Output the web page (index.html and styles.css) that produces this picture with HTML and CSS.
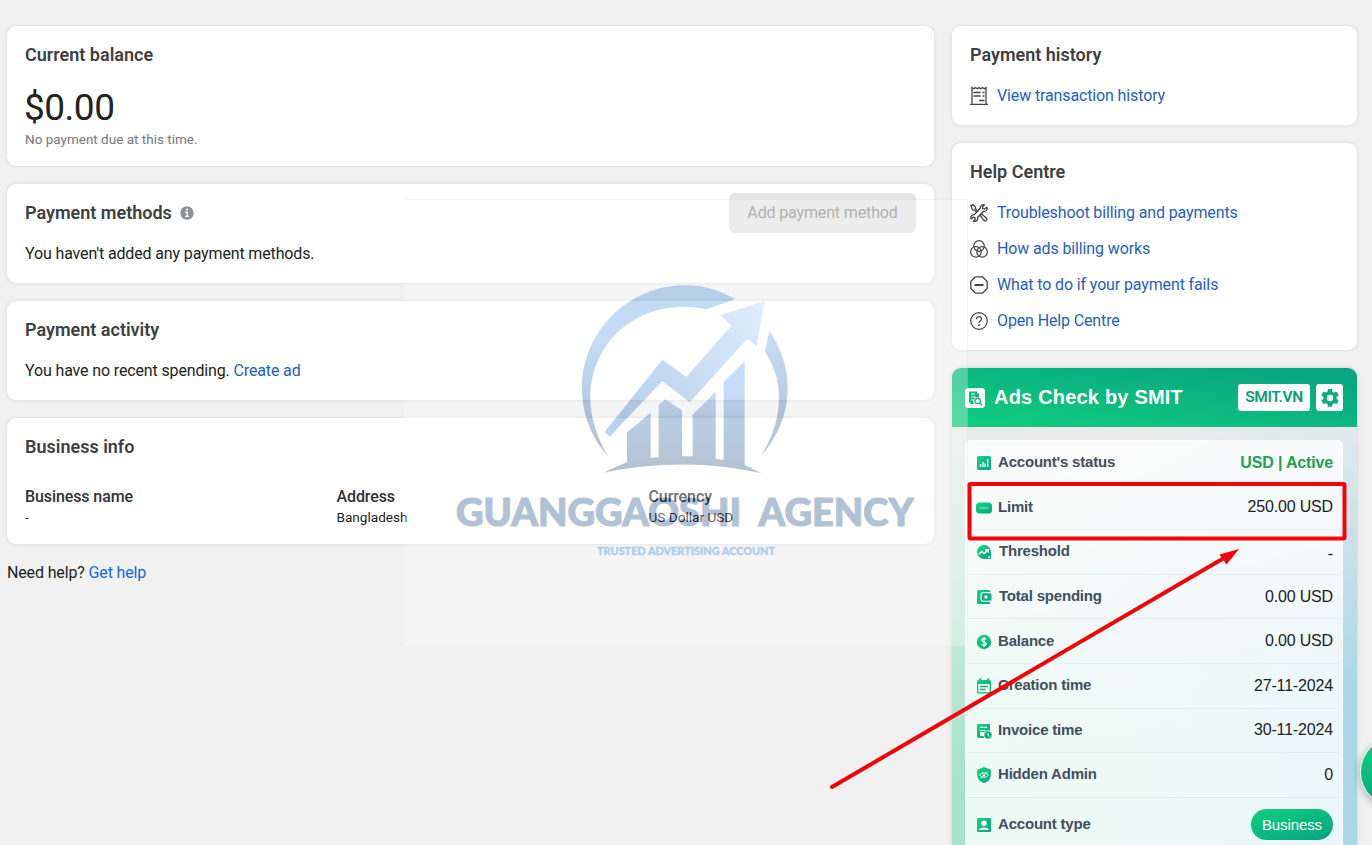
FILE: index.html
```html
<!DOCTYPE html>
<html lang="en">
<head>
<meta charset="utf-8">
<title>Billing</title>
<link rel="stylesheet" href="styles.css">
</head>
<body>
<svg class="defs" width="0" height="0"><defs>
  <linearGradient id="green" x1="0" y1="0" x2="1" y2="1"><stop offset="0" stop-color="#12d683"/><stop offset="1" stop-color="#08a57e"/></linearGradient>
</defs></svg>
<div class="page">
  <main class="main">
    <section class="card balance">
      <h2>Current balance</h2>
      <div class="amount">$0.00</div>
      <div class="note">No payment due at this time.</div>
    </section>
    <section class="card methods">
      <div class="card-head">
        <h2>Payment methods</h2>
        <svg class="info" width="14" height="14" viewBox="0 0 14 14"><circle cx="7" cy="7" r="6.7" fill="#8d9196"/><path d="M5.300 6.200H7.200V10.200M5.200 10.400h3.800" stroke="#fff" stroke-width="1.400" fill="none"/><circle cx="7" cy="3.600" r="1.100" fill="#fff"/></svg>
        <button class="add">Add payment method</button>
      </div>
      <p>You haven't added any payment methods.</p>
    </section>
    <section class="card activity">
      <h2>Payment activity</h2>
      <p>You have no recent spending. <a>Create ad</a></p>
    </section>
    <section class="card business">
      <h2>Business info</h2>
      <div class="facts">
        <div><b>Business name</b><span>-</span></div>
        <div><b>Address</b><span>Bangladesh</span></div>
        <div><b>Currency</b><span>US Dollar USD</span></div>
      </div>
    </section>
    <p class="need">Need help? <a>Get help</a></p>
  </main>
  <aside class="side">
    <section class="card history">
      <h2>Payment history</h2>
      <a class="link"><svg width="18" height="20" viewBox="0 0 18 20" fill="none" stroke="#444" stroke-width="1.300"><path d="M2 18V1.500l1.800 1.300 1.800-1.300 1.800 1.300L9 1.500l1.700 1.300 1.800-1.300 1.800 1.300L16 1.500V18M0 18.400h18M3.500 6.500h7M3.500 10h7M12.500 6.500h2M12.500 10h2M9 14.500h5.500"/></svg><span>View transaction history</span></a>
    </section>
    <section class="card help">
      <h2>Help Centre</h2>
      <a class="link"><svg width="18" height="18" viewBox="0 0 18 18" fill="none" stroke="#444" stroke-width="1.300" stroke-linejoin="round"><path d="M.8 1.200 3.200.8l2.300 2.200-.2 1.500 2.500 2.700-1.200 1.200L4 5.800l-1.500.1zM16.900 3.200l-2.500 1.900-1.700-.4-.3-1.700L14.600.9C12.300.2 10.200 1.600 10.300 4.200L4.400 10.600C1.800 10.400.3 12.700 1 14.900l2.300-1.700 1.600.4.4 1.700-1.900 2c2.300.8 4.700-1 4.100-3.800l5.900-6c2.700.3 4.300-2 3.500-4.300zM10.200 11.500l1.500-1.500 4.800 4.200c1.300 1.600-.9 3.700-2.400 2.400z"/></svg><span>Troubleshoot billing and payments</span></a>
      <a class="link"><svg width="18" height="18" viewBox="0 0 18 18" fill="none" stroke="#444" stroke-width="1.200"><circle cx="9" cy="6" r="5.300"/><circle cx="5.900" cy="11.900" r="5.300"/><circle cx="12.100" cy="11.900" r="5.300"/></svg><span>How ads billing works</span></a>
      <a class="link"><svg width="18" height="18" viewBox="0 0 18 18" fill="none" stroke="#444" stroke-width="1.300"><path d="M5.500.8h7l4.700 4.700v7l-4.700 4.700h-7L.8 12.500v-7z" stroke-linejoin="round"/><path d="M4.500 9h9" stroke-width="2"/></svg><span>What to do if your payment fails</span></a>
      <a class="link"><svg width="18" height="18" viewBox="0 0 18 18" fill="none" stroke="#444" stroke-width="1.200"><circle cx="9" cy="9" r="8.300"/><path d="M6.400 7.200C6.400 3.700 11.600 4 11.500 7c0 2-2.500 1.900-2.500 4.100"/><circle cx="9" cy="13" r=".4"/></svg><span>Open Help Centre</span></a>
    </section>
    <section class="smit">
      <header>
        <svg width="20" height="20" viewBox="0 0 20 20"><rect width="20" height="20" rx="3.500" fill="#fff"/><path d="M4 3.500h8v2h2v4.300a4 4 0 0 0-4.800 6.200H5.500v-1.500H4z" fill="#0db57f"/><path d="M6 6h4M6 9h5M6 12h2.500" stroke="#fff"/><circle cx="12.700" cy="13" r="2.700" fill="#fff" stroke="#0db57f" stroke-width="1.200"/><path d="m14.700 15 2.300 2.300" stroke="#0db57f" stroke-width="1.300"/></svg>
        <h3>Ads Check by SMIT</h3>
        <span class="tag"><span>SMIT.VN</span></span>
        <span class="tag gear"><svg width="20" height="20" viewBox="0 0 18 18"><path fill="#0bac7f" fill-rule="evenodd" d="M7.200 0h3.600l.5 2.500 1.300.7 2.400-.8 1.800 3.100-1.900 1.700v1.600l1.900 1.700-1.800 3.100-2.400-.8-1.300.7-.5 2.500H7.200l-.5-2.500-1.300-.7-2.400.8-1.800-3.100 1.900-1.700V7.200L1.200 5.500 3 2.400l2.400.8 1.300-.7zM9 5.200a2.900 2.900 0 1 0 0 5.800 2.900 2.900 0 0 0 0-5.800z" transform="translate(0 .9)"/></svg></span>
      </header>
      <div class="smit-body">
        <div class="rows">
          <div class="row"><svg viewBox="0 0 16 16"><rect x="1" y="1" width="14" height="14" rx="1.500" fill="url(#green)"/><path d="M4.500 12V9M7 12V7M9 12V8.500M11.700 12V4" stroke="#fff" stroke-width="1.300"/></svg><b>Account's status</b><span class="active">USD | Active</span></div>
          <div class="row"><svg viewBox="0 0 16 16"><rect x="0" y="2.500" width="16" height="11" rx="3.500" fill="url(#green)"/><path d="M4 8h8" stroke="#fff" stroke-width="1.200" stroke-dasharray="1.400 .8"/></svg><b>Limit</b><span>250.00 USD</span></div>
          <div class="row"><svg viewBox="0 0 16 16"><path d="M8 1a7 7 0 0 1 7 7v7H8A7 7 0 0 1 8 1z" fill="url(#green)"/><path d="m2.500 10.500 3.200-3 2.500 2L12 6M9.300 5.800h3v3" fill="none" stroke="#fff" stroke-width="1.400"/><circle cx="13.200" cy="13.200" r="1" fill="#fff"/></svg><b class="nudge">Threshold</b><span class="dash">-</span></div>
          <div class="row"><svg viewBox="0 0 16 16"><path d="M2.500 1H14v2H7.500A3 3 0 0 0 4.500 6v4.500A3 3 0 0 0 7.500 13H14v2H2.500A1.500 1.500 0 0 1 1 13.500v-11A1.500 1.500 0 0 1 2.500 1z" fill="url(#green)"/><rect x="5.800" y="4.200" width="9.700" height="7.600" rx="1.500" fill="#0bb07f"/><circle cx="10" cy="8" r="1.700" fill="#fff"/></svg><b class="nudge">Total spending</b><span>0.00 USD</span></div>
          <div class="row"><svg viewBox="0 0 16 16"><circle cx="8" cy="8" r="7.200" fill="url(#green)"/><path d="M10.300 5.500C9.500 3.700 5.800 4 5.900 6.200 6 8.400 10.200 7.500 10.200 9.800c0 2.100-3.800 2.300-4.600.3M8 3v10" fill="none" stroke="#fff" stroke-width="1.200"/></svg><b>Balance</b><span>0.00 USD</span></div>
          <div class="row"><svg viewBox="0 0 16 16"><path d="M2.500 2H3V.5h2V2h6V.5h2V2h.5A1.500 1.500 0 0 1 15 3.500V14a1.500 1.500 0 0 1-1.500 1.500h-11A1.500 1.500 0 0 1 1 14V3.500A1.500 1.500 0 0 1 2.500 2z" fill="url(#green)"/><path d="M2.300 6h11.400v8.200H2.300z" fill="#f1f9f7"/><path d="M4 8.500h8M4 11.500h5.500" stroke="#0db980" stroke-width="1.400"/></svg><b>Creation time</b><span>27-11-2024</span></div>
          <div class="row"><svg viewBox="0 0 16 16"><path d="M2 1h11a1 1 0 0 1 1 1v7H4v4h4v2H2.500A1.500 1.500 0 0 1 1 13.500V2a1 1 0 0 1 1-1z" fill="url(#green)"/><path d="M4 4.300h7M4 7.500h5" stroke="#effaf6" stroke-width="1.200"/><circle cx="12" cy="12" r="4.200" fill="#0aa97e" stroke="#effaf6"/><path d="M12 10v2.500l1.500.8" stroke="#fff" fill="none"/></svg><b>Invoice time</b><span>30-11-2024</span></div>
          <div class="row"><svg viewBox="0 0 16 16"><path d="m8 0 6.800 2.700V8c0 4-3 7-6.800 8-3.800-1-6.800-4-6.800-8V2.700z" fill="url(#green)"/><path d="M3.700 8C5.500 5 10.500 5 12.300 8c-1.800 3-6.800 3-8.600 0zM4.500 11l7-6" fill="none" stroke="#fff" stroke-width="1"/><circle cx="8" cy="8" r="1.200" fill="#fff"/></svg><b>Hidden Admin</b><span>0</span></div>
          <div class="row last"><svg viewBox="0 0 16 16"><rect x="1" y="1" width="14" height="14" rx="1.500" fill="url(#green)"/><circle cx="8" cy="6.200" r="2.700" fill="#fff"/><path d="M3 13c.5-3.300 9.500-3.300 10 0z" fill="#fff"/></svg><b>Account type</b><span class="pill">Business</span></div>
        </div>
      </div>
    </section>
  </aside>
  <div class="bubble"></div>
  <svg class="watermark" width="564" height="447" viewBox="0 0 564 447">
    <defs>
      <linearGradient id="ring" gradientUnits="userSpaceOnUse" x1="0" y1="46" x2="0" y2="580"><stop offset="0" stop-color="#2f84d8"/><stop offset=".3" stop-color="#4590e4"/><stop offset=".65" stop-color="#17569d"/><stop offset="1" stop-color="#053668"/></linearGradient>
      <linearGradient id="bars" gradientUnits="userSpaceOnUse" x1="0" y1="274" x2="0" y2="600"><stop offset="0" stop-color="#4a98f0"/><stop offset=".3" stop-color="#4590e4"/><stop offset=".5" stop-color="#2261a9"/><stop offset="1" stop-color="#053a6c"/></linearGradient>
      <linearGradient id="shaft" gradientUnits="userSpaceOnUse" x1="140" y1="490" x2="614" y2="93"><stop offset="0" stop-color="#1673d2"/><stop offset=".15" stop-color="#1a6bbd"/><stop offset=".35" stop-color="#317fd0"/><stop offset="1" stop-color="#9cc6f8"/></linearGradient>
    </defs>
    <rect width="564" height="447" fill="#fff"/>
    <path d="M0 .5H563.500V447" fill="none" stroke="#dedede"/>
    <g transform="translate(156 71) scale(.33333)">
      <path fill="url(#ring)" d="M526 88C480 60 430 46 375 46 205 46 66 185 66 355c0 80 30 150 77 203-33-58-52-118-52-173 0-160 124-275 279-275 25 0 47 3 68 8zM628 182c37 53 55 113 55 173 0 80-33 150-80 203 37-58 54-118 54-173 0-50-12-95-42-140z"/>
      <path fill="url(#shaft)" d="M134 486 307 269l72 52 135-154-33-31 133-43-24 136-28-23-173 191-82-64-158 167z"/>
      <path fill="url(#bars)" d="M131 608c29-13 49-23 70-31v-90l71-59v136l24-3V405l20-17 50 33v138h32V434l69-69v201l24 4V335l63-61v311l50 25c-154-35-314-35-473-2z"/>
    </g>
    <text class="brand" x="52" y="326.500" textLength="285" lengthAdjust="spacingAndGlyphs">GUANGGAOSHI</text>
    <text class="brand" x="354.500" y="326.500" textLength="155" lengthAdjust="spacingAndGlyphs">AGENCY</text>
    <text class="tagline" x="193" y="355.500" textLength="178" lengthAdjust="spacingAndGlyphs">TRUSTED ADVERTISING ACCOUNT</text>
  </svg>
  <svg class="marks" width="1372" height="845" viewBox="0 0 1372 845">
    <rect x="969.500" y="484" width="375" height="54.500" rx="1" fill="none" stroke="#f20508" stroke-width="4"/>
    <path d="M832 787 1224 558" stroke="#f20508" stroke-width="4" stroke-linecap="round"/>
    <path d="M1239 549 1219.500 554.500 1226.500 564.500z" fill="#f20508"/>
  </svg>
</div>
</body>
</html>
```

FILE: styles.css
```css
* { box-sizing: border-box; }
body { margin: 0; background: #f1f1f1; font-family: Roboto, sans-serif; font-size: 16px; color: #1c1e21; }
.defs { position: absolute; }
.page { position: relative; width: 1372px; height: 845px; overflow: hidden; display: flex; gap: 18px; padding: 26px 15px 0 7px; }
.main { width: 927px; display: flex; flex-direction: column; gap: 18px; }
.side { width: 405px; display: flex; flex-direction: column; gap: 18px; }
.card { background: #fff; border-radius: 9px; padding: 18px; box-shadow: 0 0 4px rgba(0, 0, 0, .11); flex: none; }
h2 { margin: 0; font-size: 18px; line-height: 22px; font-weight: 600; color: #3d3f42; }
p { margin: 0; line-height: 20px; letter-spacing: -.14px; }
a { color: #1f5fbf; }
.balance { height: 140px; }
.amount { font-size: 37px; line-height: 44px; margin: 20px 0 0 -1px; letter-spacing: -.5px; color: #222; }
.note { font-size: 13.5px; line-height: 18px; color: #75787c; }
.methods { height: 99px; }
.card-head { display: flex; align-items: center; height: 22px; }
.info { margin-left: 8px; }
.add { margin-left: auto; width: 187px; height: 40px; border: 0; border-radius: 6px; background: #e4e4e4; color: #8e8e8e; font: 16px Roboto, sans-serif; letter-spacing: -.14px; padding: 0 0 2px; }
.card p { margin-top: 20px; }
.activity { height: 99px; }
.business { height: 126px; }
.facts { display: grid; grid-template-columns: 311.5px 312px 1fr; margin-top: 28px; }
.facts div { display: flex; flex-direction: column; }
.facts b { font-size: 16px; font-weight: 500; line-height: 21px; color: #303236; letter-spacing: -.1px; }
.facts span { font-size: 13.6px; line-height: 20px; }
.need { padding-top: 1px; }
.need a { color: #1468e0; }
.history { height: 99px; }
.help { height: 207px; }
.link { display: flex; align-items: center; gap: 9px; height: 20px; margin-top: 16px; letter-spacing: -.13px; }
.link span { padding-bottom: 2px; }
h2 + .link { margin-top: 20px; }
.smit { height: 490px; flex: none; border-radius: 9px 9px 0 0; overflow: hidden; font-family: "Liberation Sans", sans-serif; box-shadow: 0 0 4px rgba(0, 0, 0, .15); }
.smit header { height: 59px; padding: 0 14px 0 13px; display: flex; align-items: center; background: linear-gradient(8deg, #10cc80 5%, #08a57f 90%); }
.smit h3 { margin: 0 auto 0 9px; font-size: 20px; line-height: 24px; padding-bottom: 2px; letter-spacing: .2px; color: #fff; }
.tag { height: 27px; width: 72px; border-radius: 3px; background: #fff; display: flex; align-items: center; justify-content: center; color: #0b9c78; font-size: 15.5px; font-weight: 600; letter-spacing: -.4px; font-family: Roboto, sans-serif; }
.tag span { padding-bottom: 2px; }
.gear { width: 27px; margin-left: 6px; }
.smit-body { padding: 13px 14px 0 13px; height: 440px; background: radial-gradient(circle 430px at 0 100%, #a5e4ca 20%, rgba(165, 228, 202, 0) 100%), radial-gradient(circle 430px at 100% 90%, #a9d7e8 30%, rgba(169, 215, 232, 0) 100%), #e9ebec; }
.rows { height: 430px; border-radius: 5px 5px 0 0; background: rgba(255, 255, 255, .79); border: 1px solid rgba(255, 255, 255, .6); border-bottom: 0; padding: 0 1px; }
.row { height: 44.6px; display: flex; align-items: center; border-bottom: 1px solid rgba(200, 225, 225, .35); padding: 0 8px 0 9px; }
.row svg { width: 16px; height: 16px; margin-right: 6px; margin-top: 1px; }
.row b { font-size: 15px; letter-spacing: -.2px; color: #414f5e; padding-bottom: 2px; }
.row .nudge { padding-left: 1px; }
.row span { margin-left: auto; font-size: 16px; letter-spacing: -.16px; }
.row .dash { padding-top: 4px; }
.row .active { color: #219e55; font-weight: 700; }
.last { height: 54px; border: 0; }
.row .pill { width: 82px; height: 31px; line-height: 31px; font-size: 15px; letter-spacing: -.1px; border-radius: 16px; background: linear-gradient(160deg, #10cf81, #07a47e); color: #fff; text-align: center; }
.bubble { position: absolute; left: 1360px; top: 737px; width: 70px; height: 70px; border-radius: 50%; border: 1px solid #d9f7eb; background: linear-gradient(180deg, #10d182, #08a77f); box-shadow: 0 2px 8px rgba(0, 0, 0, .3); }
.watermark { position: absolute; left: 404px; top: 199px; opacity: .3; }
.brand { font-family: Lato, sans-serif; font-weight: 900; font-size: 37px; fill: #053a7a; stroke: #053a7a; stroke-width: 1.2px; stroke-linejoin: round; }
.tagline { font-family: Lato, sans-serif; font-weight: 900; font-size: 10.5px; fill: #1679e0; stroke: #1679e0; stroke-width: .4px; }
.marks { position: absolute; left: 0; top: 0; }
```
